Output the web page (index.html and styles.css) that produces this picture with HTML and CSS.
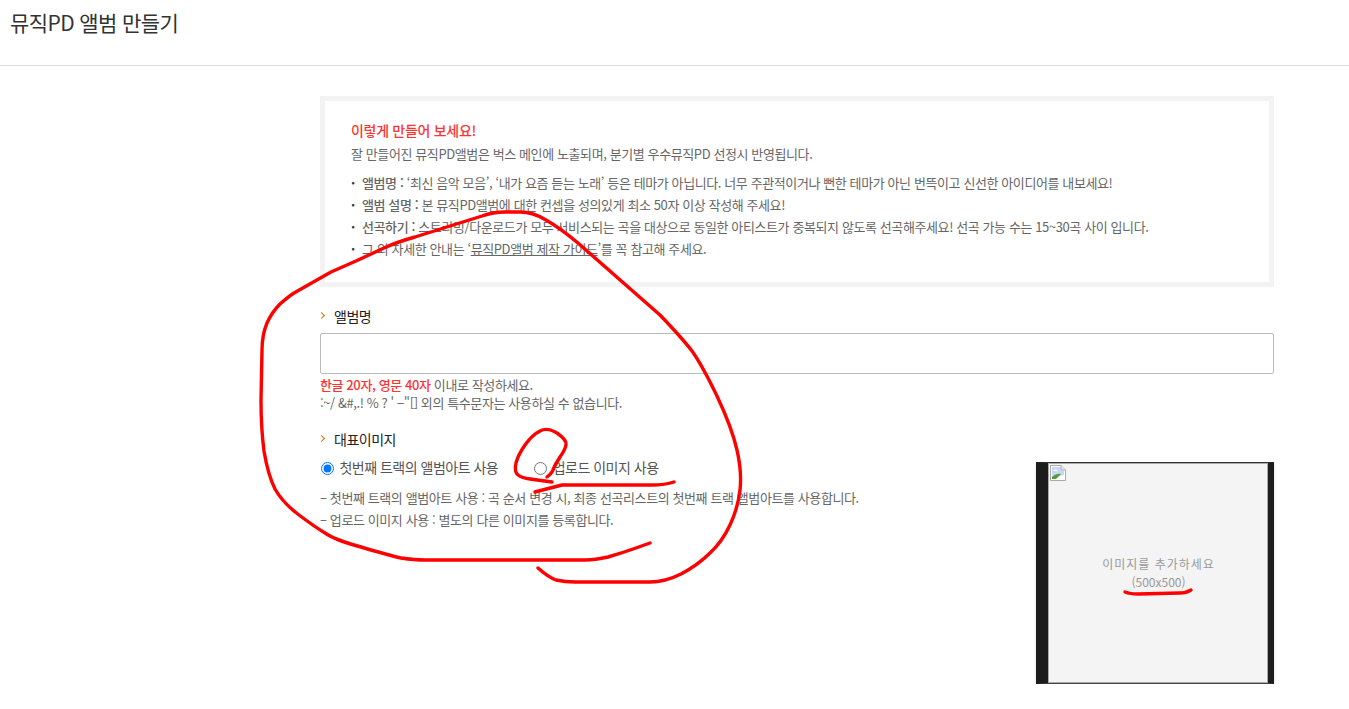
FILE: index.html
```html
<!DOCTYPE html>
<html lang="ko">
<head>
    <meta charset="UTF-8">
    <meta name="viewport" content="width=device-width, initial-scale=1.0">
    <title>뮤직PD 앨범 만들기</title>
    <link rel="stylesheet" href="styles.css">
</head>
<body>
    <header class="page-head">
        <h1>뮤직PD 앨범 만들기</h1>
    </header>

    <main class="content">
        <section class="notice">
            <h2>이렇게 만들어 보세요!</h2>
            <p class="notice-lead">잘 만들어진 뮤직PD앨범은 벅스 메인에 노출되며, 분기별 우수뮤직PD 선정시 반영됩니다.</p>
            <ul>
                <li><b>앨범명 :</b> ‘최신 음악 모음’, ‘내가 요즘 듣는 노래’ 등은 테마가 아닙니다. 너무 주관적이거나 뻔한 테마가 아닌 번뜩이고 신선한 아이디어를 내보세요!</li>
                <li><b>앨범 설명 :</b> 본 뮤직PD앨범에 대한 컨셉을 성의있게 최소 50자 이상 작성해 주세요!</li>
                <li><b>선곡하기 :</b> 스트리밍/다운로드가 모두 서비스되는 곡을 대상으로 동일한 아티스트가 중복되지 않도록 선곡해주세요! 선곡 가능 수는 15~30곡 사이 입니다.</li>
                <li>그 외 자세한 안내는 ‘<a href="#">뮤직PD앨범 제작 가이드</a>’를 꼭 참고해 주세요.</li>
            </ul>
        </section>

        <section class="field">
            <h3 class="field-title">앨범명</h3>
            <input class="text-input" type="text">
            <p class="hint"><em>한글 20자, 영문 40자</em> 이내로 작성하세요.</p>
            <p class="hint">:~/ &amp;#,.! % ? ' −"[] 외의 특수문자는 사용하실 수 없습니다.</p>
        </section>

        <section class="field image-field">
            <div class="image-options">
                <h3 class="field-title">대표이미지</h3>
                <div class="radios">
                    <label><input type="radio" name="cover" checked> 첫번째 트랙의 앨범아트 사용</label>
                    <label><input type="radio" name="cover"> 업로드 이미지 사용</label>
                </div>
                <p class="desc">– 첫번째 트랙의 앨범아트 사용 : 곡 순서 변경 시, 최종 선곡리스트의 첫번째 트랙 앨범아트를 사용합니다.</p>
                <p class="desc">– 업로드 이미지 사용 : 별도의 다른 이미지를 등록합니다.</p>
            </div>
            <div class="cover">
                <svg class="broken-img" width="16" height="16" viewBox="0 0 16 16">
                    <path d="M0.5 0.5H11L15.5 5V15.5H0.5Z" fill="#fff" stroke="#a9a9a9"/>
                    <path d="M2 2H10.5V5.5H14V10L2 13Z" fill="#c5d8f5"/>
                    <path d="M3 6C4 4 7 4 8 6Z" fill="#fff"/>
                    <path d="M2 14V12C5 9 9 8 11 9L6 14Z" fill="#4fa02f"/>
                    <path d="M11 0.5V5H15.5" fill="#e8e8e8" stroke="#a9a9a9"/>
                </svg>
                <p>이미지를 추가하세요</p>
                <p class="cover-size">(500x500)</p>
            </div>
        </section>
    </main>

    <!-- red pen marks drawn over the capture -->
    <svg class="pen" width="1349" height="709" viewBox="0 0 1349 709">
        <path d="M650 543L636 548Q622 553 608 557Q595 560 585 560L425 560Q415 560 401 558Q388 555 361 547Q335 540 325 533Q315 527 299 515Q283 503 275 489Q268 475 264 451Q261 428 261 400L262 350Q262 335 267 323Q272 312 280 304Q288 297 294 293L331 272L356 261L384 248Q397 242 415 237L482 216Q493 212 505 212L520 212Q533 212 546 220Q560 228 578 243L660 315Q682 338 692 351Q702 365 717 396Q732 428 737 450Q742 472 740 490Q738 508 730 525Q722 542 710 553Q698 565 681 574Q665 582 650 582L575 582Q565 582 556 580Q548 577 538 568"/>
        <path d="M552 482L530 479Q522 478 518 475Q514 472 516 463Q518 455 525 445Q532 435 540 431Q547 427 557 433Q567 440 566 445Q565 450 560 457Q555 465 553 470Q552 473 547 477"/>
        <path d="M535 492Q550 488 562 485L652 485Q665 485 674 482"/>
        <path d="M1125 592Q1130 594 1138 594L1180 593Q1186 593 1191 590"/>
    </svg>
</body>
</html>
```

FILE: styles.css
```css
body {
    margin: 0;
    font-family: "Noto Sans CJK KR", "Noto Sans", sans-serif;
    font-size: 13px;
    letter-spacing: -0.4px;
    color: #666;
    background-color: #fff;
}
p, ul, h1, h2, h3 {
    margin: 0;
    padding: 0;
}
.page-head {
    height: 65px;
    padding-left: 10px;
    border-bottom: 1px solid #ddd;
}
.page-head h1 {
    font-size: 21px;
    font-weight: 400;
    line-height: 44px;
    letter-spacing: -0.6px;
    color: #333;
}
.content {
    width: 954px;
    margin-left: 320px;
    padding-top: 30px;
}
.notice {
    box-sizing: border-box;
    height: 191px;
    padding: 17px 26px 0;
    border: 5px solid #f3f3f3;
}
.notice h2 {
    font-size: 14px;
    font-weight: 500;
    line-height: 25px;
    letter-spacing: -0.3px;
    color: #f33;
}
.notice-lead {
    line-height: 22px;
    margin-bottom: 7px;
}
.notice ul {
    list-style: none;
}
.notice li {
    position: relative;
    padding-left: 11px;
    line-height: 22px;
}
.notice li::before {
    content: "·";
    position: absolute;
    left: 0;
    font-weight: 700;
    color: #333;
}
.notice b {
    font-weight: 500;
}
.notice a {
    color: #666;
}
.field {
    margin-top: 18px;
}
.field-title {
    font-size: 14px;
    font-weight: 400;
    line-height: 22px;
    letter-spacing: -0.5px;
    padding-left: 14px;
    color: #222;
    position: relative;
}
.field-title::before {
    content: "";
    position: absolute;
    left: -1px;
    top: 8px;
    width: 4px;
    height: 4px;
    border-top: 1.5px solid #e86c00;
    border-right: 1.5px solid #e86c00;
    transform: rotate(45deg);
}
.text-input {
    display: block;
    box-sizing: border-box;
    width: 100%;
    height: 41px;
    margin-top: 6px;
    border: 1px solid #bbb;
    border-radius: 2px;
}
.hint {
    line-height: 18px;
}
.hint:nth-of-type(1) {
    margin-top: 2px;
}
.hint em {
    font-style: normal;
    font-weight: 500;
    color: #f33;
}
.image-field {
    display: flex;
    justify-content: space-between;
    margin-top: 16px;
}
.radios {
    display: flex;
    gap: 35px;
    margin-top: 6px;
    margin-bottom: 9px;
    font-size: 14px;
    letter-spacing: -0.5px;
    line-height: 22px;
    color: #555;
}
.radios input {
    margin: 0 2px 0 1px;
    vertical-align: -2px;
}
.desc {
    line-height: 22px;
}
.cover {
    box-sizing: border-box;
    position: relative;
    width: 238px;
    height: 222px;
    margin-top: 34px;
    padding-top: 92px;
    padding-left: 1px;
    text-align: center;
    line-height: 18px;
    font-size: 12px;
    color: #999;
    letter-spacing: 1px;
    background-color: #f4f4f4;
    border-style: solid;
    border-color: #333 #1c1c1c #444 #1c1c1c;
    border-width: 1px 6px 1px 12px;
    box-shadow: 0 2px 3px rgba(0, 0, 0, 0.15), inset 0 0 0 1px #aaa;
}
.cover-size {
    letter-spacing: 0;
}
.broken-img {
    position: absolute;
    left: 2px;
    top: 2px;
}
.pen {
    position: absolute;
    left: 0;
    top: 0;
    pointer-events: none;
}
.pen path {
    fill: none;
    stroke: #f00;
    stroke-width: 3.4;
    stroke-linecap: round;
    stroke-linejoin: round;
}
```
